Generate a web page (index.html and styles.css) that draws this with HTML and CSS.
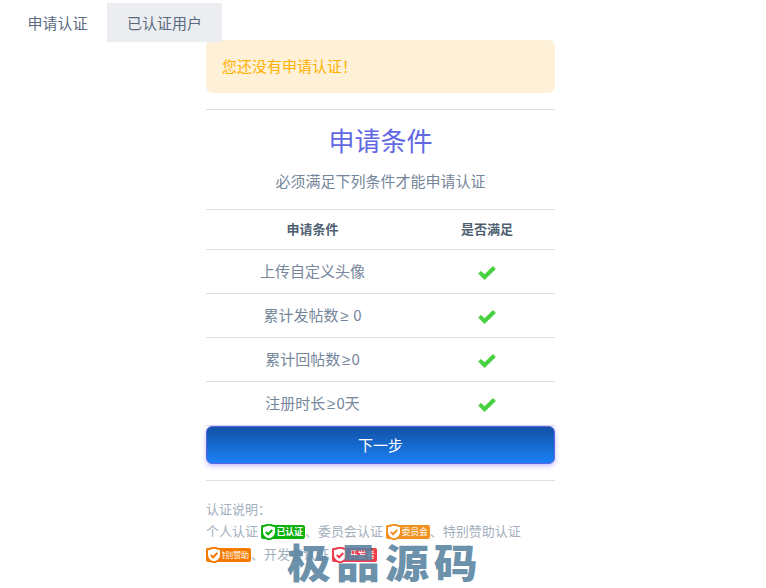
FILE: index.html
```html
<!DOCTYPE html>
<html lang="zh-CN">
<head>
<meta charset="utf-8">
<title>申请认证</title>
<link rel="stylesheet" href="styles.css">
</head>
<body>
<nav class="tabs">
  <a class="tab tab-first">申请认证</a>
  <a class="tab tab-active">已认证用户</a>
</nav>
<main class="panel">
  <div class="alert">您还没有申请认证！</div>
  <hr class="rule rule-top">
  <h2 class="title">申请条件</h2>
  <p class="subtitle">必须满足下列条件才能申请认证</p>
  <table class="conditions">
    <thead>
      <tr><th class="col-a">申请条件</th><th>是否满足</th></tr>
    </thead>
    <tbody>
      <tr><td>上传自定义头像</td><td><svg class="check" viewBox="0 0 18 14"><path d="M1 7.500l2.600-2.400 3.200 3L14.400 .8 17 3.300 6.800 13.400z"/></svg></td></tr>
      <tr><td>累计发帖数<span class="ge">≥</span> 0</td><td><svg class="check" viewBox="0 0 18 14"><path d="M1 7.500l2.600-2.400 3.200 3L14.400 .8 17 3.300 6.800 13.400z"/></svg></td></tr>
      <tr><td>累计回帖数<span class="ge">≥</span>0</td><td><svg class="check" viewBox="0 0 18 14"><path d="M1 7.500l2.600-2.400 3.200 3L14.400 .8 17 3.300 6.800 13.400z"/></svg></td></tr>
      <tr><td>注册时长<span class="ge">≥</span>0天</td><td><svg class="check" viewBox="0 0 18 14"><path d="M1 7.500l2.600-2.400 3.200 3L14.400 .8 17 3.300 6.800 13.400z"/></svg></td></tr>
    </tbody>
  </table>
  <button class="next">下一步</button>
  <hr class="rule rule-bottom">
  <section class="note">
    <div class="note-head">认证说明：</div>
    <div class="note-line">个人认证 <span class="badge badge-green"><svg class="shield" viewBox="0 0 16 16"><path class="sh" d="M8 .5l7 2v5.500c0 4-3.500 6.500-7 7.500-3.500-1-7-3.500-7-7.500V2.500z"/><path class="tick" d="M4.800 8l2.300 2.300 4.200-4.300"/></svg><b>已认证</b></span>、委员会认证 <span class="badge badge-orange"><svg class="shield" viewBox="0 0 16 16"><path class="sh" d="M8 .5l7 2v5.500c0 4-3.500 6.500-7 7.500-3.500-1-7-3.500-7-7.500V2.500z"/><path class="tick" d="M4.800 8l2.300 2.300 4.200-4.300"/></svg><b>委员会</b></span>、特别赞助认证</div>
    <div class="note-line"><span class="badge badge-deep"><svg class="shield" viewBox="0 0 16 16"><path class="sh" d="M8 .5l7 2v5.500c0 4-3.500 6.500-7 7.500-3.500-1-7-3.500-7-7.500V2.500z"/><path class="tick" d="M4.800 8l2.300 2.300 4.200-4.300"/></svg><b>特别赞助</b></span>、开发者认证 <span class="badge badge-red"><svg class="shield" viewBox="0 0 16 16"><path class="sh" d="M8 .5l7 2v5.500c0 4-3.500 6.500-7 7.500-3.500-1-7-3.500-7-7.500V2.500z"/><path class="tick" d="M4.800 8l2.300 2.300 4.200-4.300"/></svg><b>开发者</b></span></div>
  </section>
</main>
<div class="watermark">极品源码</div>
</body>
</html>
```
FILE: styles.css
```css
* { box-sizing: border-box; }
html, body { margin: 0; padding: 0; height: 588px; overflow: hidden; background: #fff; }
body {
  position: relative;
  font-family: "Noto Sans CJK SC", "Liberation Sans", sans-serif;
  color: #75869b;
  font-size: 15px;
}
.tabs { display: flex; height: 42px; padding-top: 3px; }
.tab {
  height: 39px;
  line-height: 39px;
  text-align: center;
  font-size: 15px;
  color: #5a6b80;
}
.tab-first { width: 107px; padding-left: 8px; }
.tab-active { width: 115px; background: #ebedf1; }
.panel { width: 349px; margin: -2px 0 0 206px; }
.alert {
  height: 53px;
  line-height: 51px;
  padding-left: 16px;
  border-radius: 7px;
  background: #fff1d7;
  color: #ffb000;
  font-size: 15px;
}
.rule { border: 0; height: 1px; background: #dcdee2; margin: 0; }
.rule-top { margin-top: 16px; }
.title {
  margin: 11px 0 0;
  height: 38px;
  line-height: 38px;
  text-align: center;
  font-size: 26px;
  font-weight: 400;
  color: #6268e4;
}
.subtitle {
  margin: 7px 0 0;
  height: 30px;
  line-height: 30px;
  text-align: center;
}
.conditions { width: 349px; border-collapse: collapse; table-layout: fixed; margin-top: 13px; border-top: 1px solid #dcdee2; }
.conditions th {
  height: 40px;
  font-size: 13px;
  font-weight: 700;
  color: #4f5f73;
  border-bottom: 1px solid #dcdee2;
  padding: 0 0 2px;
}
.col-a { width: 213px; }
.conditions td {
  height: 44px;
  text-align: center;
  padding: 0 0 2px;
  border-bottom: 1px solid #dcdee2;
}
.ge { font-family: "Liberation Sans", sans-serif; margin: 0 1.500px; }
.check { display: block; width: 20px; height: 16px; margin: 4px auto 0; fill: #49d142; }
.next {
  display: block;
  width: 349px;
  height: 38px;
  margin-top: 0;
  padding: 0 0 2px;
  border: 1px solid #5f63e6;
  border-radius: 6px;
  background: linear-gradient(#1152a6, #1b80f4);
  box-shadow: 0 2px 5px rgba(98, 90, 240, .4);
  color: #fff;
  font: 15px "Noto Sans CJK SC", sans-serif;
}
.rule-bottom { margin-top: 16px; }
.note { margin-top: 16px; font-size: 13px; line-height: 23px; color: #a3afbd; }
.note-head { height: 22px; }
.note-line { display: block; height: 23px; white-space: nowrap; }
.badge {
  display: inline-flex;
  align-items: center;
  justify-content: flex-end;
  height: 14px;
  vertical-align: 1px;
  border-radius: 2px;
  position: relative;
  padding-right: 2px;
  color: #fff;
}
.badge b { font-size: 9px; font-weight: 400; line-height: 14px; letter-spacing: -.2px; white-space: nowrap; }
.shield { position: absolute; left: 0; top: -1px; width: 16px; height: 16px; }
.sh { fill: #fff; stroke-width: 2; }
.tick { fill: none; stroke-width: 2; }
.badge-green { background: #0db10d; width: 44px; }
.badge-green b { font-weight: 700; }
.badge-green .sh, .badge-green .tick { stroke: #0db10d; }
.badge-orange { background: #f09120; width: 44px; }
.badge-orange .sh, .badge-orange .tick { stroke: #f09120; }
.badge-deep { background: #f47a00; width: 45px; }
.badge-deep b { font-size: 8px; letter-spacing: -.1px; }
.badge-deep .sh, .badge-deep .tick { stroke: #f47a00; }
.badge-red { background: #ee3b4b; width: 45px; }
.badge-red .sh, .badge-red .tick { stroke: #ee3b4b; }
.watermark {
  position: absolute;
  left: 287px;
  top: 532px;
  font-size: 40px;
  line-height: 58px;
  font-weight: 900;
  letter-spacing: 4.500px;
  white-space: nowrap;
  transform: scaleX(1.1);
  transform-origin: left center;
  color: rgba(88, 130, 160, .88);
}
```
